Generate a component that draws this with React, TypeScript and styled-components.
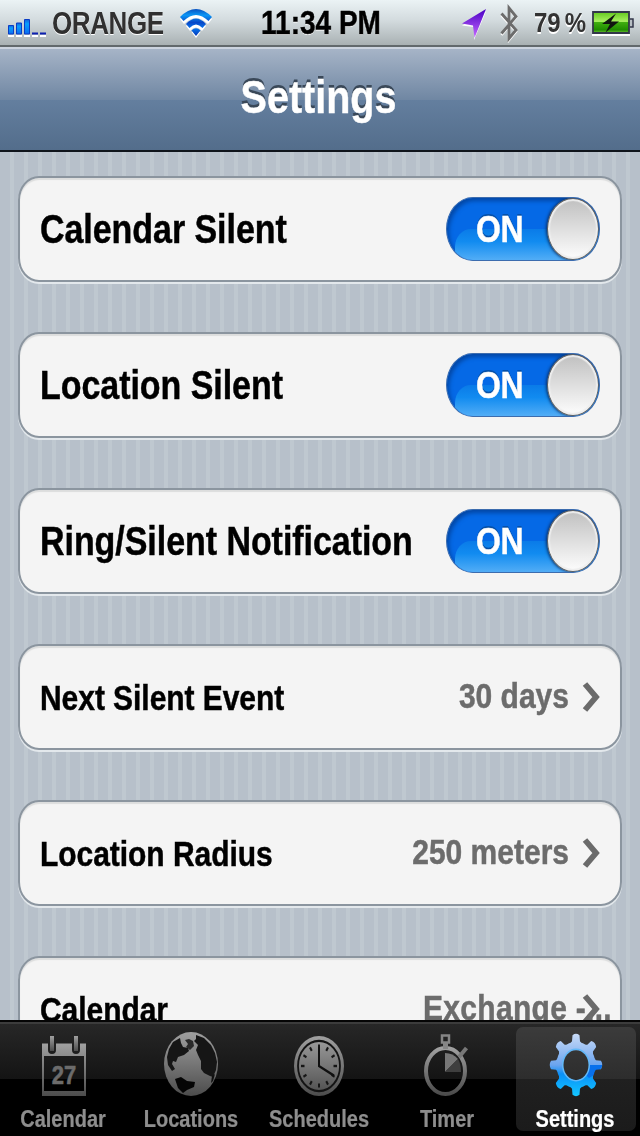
import styled, { createGlobalStyle, css } from 'styled-components'

const GlobalStyle = createGlobalStyle`
  * {
    box-sizing: border-box;
  }

  body {
    margin: 0;
    overflow: hidden;
    font-family: 'Liberation Sans', Arial, sans-serif;
    font-weight: bold;
  }
`

const settings = [
  { title: 'Calendar Silent', on: true },
  { title: 'Location Silent', on: true },
  { title: 'Ring/Silent Notification', on: true },
  { title: 'Next Silent Event', value: '30 days' },
  { title: 'Location Radius', value: '250 meters' },
  { title: 'Calendar', value: 'Exchange -...', overflow: true },
]

const SignalIcon = () => (
  <svg width="40" height="20" viewBox="0 0 40 20">
    <defs>
      <linearGradient id="signal" x1="0" y1="0" x2="0" y2="1">
        <stop offset="0" stopColor="#1560d8" />
        <stop offset="0.3" stopColor="#08a0ff" />
        <stop offset="1" stopColor="#0b6cf0" />
      </linearGradient>
    </defs>
    <path d="M0 17h6v2H0zM8 17h6v2H8zM16 17h6v2h-6zM24 17h6v2h-6zM32 17h6v2h-6z" fill="#fff" />
    <g fill="url(#signal)" stroke="#0a3dc5" strokeWidth="1">
      <path d="M.5 7.500h5v8.500h-5z" />
      <path d="M8.500 5h5v11h-5z" />
      <path d="M16.500 1.500h5V16h-5z" />
    </g>
    <path d="M24 14.500h6v2h-6zM32 14.500h6v2h-6z" fill="#0c1fb0" />
  </svg>
)

const WifiIcon = () => (
  <svg width="34" height="32" viewBox="0 -1 34 32">
    <defs>
      <linearGradient id="wifi" x1="0" y1="0" x2="0" y2="29" gradientUnits="userSpaceOnUse">
        <stop offset="0" stopColor="#0646b8" />
        <stop offset="0.25" stopColor="#0a96f5" />
        <stop offset="0.5" stopColor="#0848c8" />
        <stop offset="0.7" stopColor="#0877f0" />
        <stop offset="1" stopColor="#0430b0" />
      </linearGradient>
    </defs>
    <path d="M1 11Q17-6 33 11l-4 5Q17 4 5 16zM7 18q10-11 20 0l-4 5q-6-7-12 0zM12.500 24q4.500-4 9 0L17 30z" fill="#fff" />
    <path d="M1 9Q17-7 33 9l-3.500 4Q17 1 4.500 13zM7 16q10-11 20 0l-3.500 4q-6.500-7-13 0zM12.500 22.500q4.500-4.500 9 0L17 28z" fill="url(#wifi)" />
  </svg>
)

const LocationIcon = () => (
  <svg width="26" height="32" viewBox="0 0 26 32">
    <defs>
      <linearGradient id="arrow" x1="0" y1="0" x2="0" y2="1">
        <stop offset="0" stopColor="#4a00c4" />
        <stop offset="1" stopColor="#c66aff" />
      </linearGradient>
    </defs>
    <path d="M25 2.500 13 31V18L1 16.500z" fill="#fff" />
    <path d="M25 0 13.500 29 12 16.500 1 14.500z" fill="url(#arrow)" />
  </svg>
)

const BluetoothIcon = () => (
  <svg width="20" height="40" viewBox="0 0 20 40">
    <path d="M1.500 12.500 16 28.500 9 37V6l7 8.500L1.500 32" fill="none" stroke="#fff" strokeWidth="2.500" />
    <path d="M1.500 10.500 16 27 9 35.500V5l7 8.500L1.500 30.500" fill="none" stroke="#6c6c6c" strokeWidth="2.800" />
  </svg>
)

const BatteryIcon = () => (
  <svg width="42" height="26" viewBox="0 -1 42 26">
    <defs>
      <linearGradient id="battery" x1="0" y1="0" x2="0" y2="1">
        <stop offset="0" stopColor="#62c81e" />
        <stop offset="0.45" stopColor="#a8f060" />
        <stop offset="0.5" stopColor="#3fae10" />
        <stop offset="0.85" stopColor="#1f8c00" />
        <stop offset="1" stopColor="#73c838" />
      </linearGradient>
    </defs>
    <path d="M0 23h38v2H0z" fill="#fff" />
    <path d="M1 1h36v21H1z" fill="url(#battery)" stroke="#33374a" strokeWidth="1.800" />
    <path d="M38 8h3v8h-3" fill="#b8bfc4" stroke="#33374a" strokeWidth="1.500" />
    <path d="M24 2.500 10 13h8l-4.500 8.500L27 10.500h-8z" fill="#101510" />
  </svg>
)

const Chevron = () => (
  <svg width="18" height="32" viewBox="0 0 18 32">
    <path d="M3 3 14 16 3 29" fill="none" stroke="#6a6a6a" strokeWidth="5.800" />
  </svg>
)

const CalendarIcon = () => (
  <svg width="46" height="62" viewBox="-2 -2 46 62">
    <path fillRule="evenodd" d="M0 7.500h6V14q0 4 4 4t4-4V7.500h16V14q0 4 4 4t4-4V7.500h6V60H0zM2 20v35h40V20z" fill="url(#glyph)" />
    <path d="M8 0h4v15H8zM32 0h4v15h-4z" fill="url(#glyph)" />
    <text transform="translate(22 48) scale(1 1.180)" textAnchor="middle" fontSize="22" fill="#6c6c6c" stroke="#6c6c6c" strokeWidth="0.500">
      27
    </text>
  </svg>
)

const GlobeIcon = () => (
  <svg width="56" height="66" viewBox="0 1 56 66">
    <ellipse cx="28" cy="33" rx="27" ry="32" fill="url(#glyph)" />
    <path d="M17 7 10 11 6 18 4 26 5 34 9 40 12 38 9 33 10 30 13 31 15 26 21 24 26 20 25 17 20 16 18 12z" fill="#161616" />
    <path d="m22 9 4-1 4 2 1 5-4 4-4-3 2-3z" fill="#2a2a2a" />
    <path d="m33 4 8 3 7 7 4 8 2 9-1 8-3 7-3-1-6-3-3-4V30l-3-6-2-5 2-5-4-4 2-2z" fill="#161616" />
    <path d="m12 48 6-2 6 4 8 1-1 5-7 3-4 3-5-5z" fill="#050505" />
    <path d="m49 45 3-2-2 7-2 2z" fill="#101010" />
  </svg>
)

const ticks = Array.from({ length: 12 }, (_, i) => i * 30)

const ClockIcon = () => (
  <svg width="50" height="62" viewBox="0 -2 50 62">
    <g transform="scale(1 1.200)">
      <circle cx="25" cy="25" r="25" fill="url(#glyph)" />
      <circle cx="25" cy="25" r="21" fill="none" stroke="#141414" strokeWidth="1.800" />
      {ticks.map(angle => (
        <path key={angle} d="M25 7v3.500" stroke="#161616" strokeWidth="2" transform={`rotate(${angle} 25 25)`} />
      ))}
      <path d="M25 9v16l15 8" fill="none" stroke="#101010" strokeWidth="2" />
    </g>
  </svg>
)

const TimerIcon = () => (
  <svg width="46" height="62" viewBox="0 0 46 62">
    <ellipse cx="21.500" cy="37" rx="19.500" ry="23" fill="none" stroke="url(#glyph)" strokeWidth="4" />
    <path d="M18 1.500h7v7h-7z" fill="none" stroke="#858585" strokeWidth="2.500" />
    <path d="M19 9h5v6h-5z" fill="#858585" />
    <path d="m35 23 7.500-9" fill="none" stroke="#777" strokeWidth="4" />
    <path d="M21 19q8 0 13 6L21 38z" fill="#777" />
    <path d="M34 25q3 5 3 13H21z" fill="#3f3f3f" />
  </svg>
)

const teeth = Array.from({ length: 8 }, (_, i) => i * 45)

const GearIcon = () => (
  <svg width="56" height="64" viewBox="-2 0 56 64">
    <defs>
      <linearGradient id="gear" x1="0" y1="0" x2="0" y2="1">
        <stop offset="0" stopColor="#cbdcf7" />
        <stop offset="0.500" stopColor="#6ba4ee" />
        <stop offset="0.640" stopColor="#0990f8" />
        <stop offset="1" stopColor="#14c8ff" />
      </linearGradient>
      <mask id="gearMask">
        <g transform="translate(27 32) scale(1 1.190)">
          <circle r="19.500" fill="#fff" />
          {teeth.map(angle => (
            <path key={angle} d="M-7-17-4-20-3.500-25Q0-27.500 3.500-25L4-20 7-17z" fill="#fff" transform={`rotate(${angle})`} />
          ))}
          <circle r="12.500" fill="#000" />
        </g>
      </mask>
    </defs>
    <g mask="url(#gearMask)">
      <path d="M0 0h54v64H0z" fill="url(#gear)" />
      <path d="M27 32h27q-4 8-14 13z" fill="#0870ec" />
      <ellipse cx="27" cy="32" rx="13" ry="15.500" fill="none" stroke="#62b8f8" strokeWidth="2" />
    </g>
  </svg>
)

const tabs = [
  { label: 'Calendar', Icon: CalendarIcon },
  { label: 'Locations', Icon: GlobeIcon },
  { label: 'Schedules', Icon: ClockIcon },
  { label: 'Timer', Icon: TimerIcon },
  { label: 'Settings', Icon: GearIcon, active: true },
]

const App = () => {
  return (
    <S.Screen>
      <GlobalStyle />
      <S.Defs>
        <defs>
          <linearGradient id="glyph" x1="0" y1="0" x2="0" y2="1">
            <stop offset="0" stopColor="#a0a0a0" />
            <stop offset="1" stopColor="#4c4c4c" />
          </linearGradient>
        </defs>
      </S.Defs>

      <S.StatusBar>
        <S.StatusSide>
          <SignalIcon />
          <S.Carrier>ORANGE</S.Carrier>
          <WifiIcon />
        </S.StatusSide>
        <S.Time>11:34 PM</S.Time>
        <S.StatusSide $end>
          <LocationIcon />
          <BluetoothIcon />
          <S.Percent>
            <span>79</span>
            <span>%</span>
          </S.Percent>
          <BatteryIcon />
        </S.StatusSide>
      </S.StatusBar>

      <S.NavBar>
        <S.Title>Settings</S.Title>
      </S.NavBar>

      <S.Content>
        {settings.map(({ title, on, value, overflow }) => (
          <S.Row key={title}>
            <S.RowTitle $large={on}>{title}</S.RowTitle>
            {on ? (
              <S.Switch>
                <S.SwitchText>ON</S.SwitchText>
                <S.Knob />
              </S.Switch>
            ) : (
              <S.Detail>
                <S.Value $overflow={overflow}>{value}</S.Value>
                <Chevron />
              </S.Detail>
            )}
          </S.Row>
        ))}
      </S.Content>

      <S.TabBar>
        {tabs.map(({ label, Icon, active }) => (
          <S.Tab key={label} $active={active}>
            <S.TabIcon>
              <Icon />
            </S.TabIcon>
            <S.TabLabel>{label}</S.TabLabel>
          </S.Tab>
        ))}
      </S.TabBar>
    </S.Screen>
  )
}

// letters are taller and a bit heavier than the font draws them
const Tall = css`
  display: block;
  white-space: nowrap;
  transform: scaleY(1.183);
  -webkit-text-stroke: 0.4px currentColor;
`

const S = {
  Screen: styled.div`
    display: flex;
    flex-direction: column;
    width: 640px;
    height: 1136px;
    overflow: hidden;
    background: #000;
  `,

  Defs: styled.svg`
    position: absolute;
    width: 0;
    height: 0;
  `,

  StatusBar: styled.header`
    display: grid;
    grid-template-columns: 1fr auto 1fr;
    align-items: center;
    flex: none;
    height: 47px;
    padding: 0 6px 0 8px;
    border-bottom: 2px solid #62696c;
    background: linear-gradient(#ebf3f5, #d3dbde 45%, #a9b1b3);
  `,

  StatusSide: styled.div<{ $end?: boolean }>`
    display: flex;
    align-items: center;
    justify-content: ${({ $end }) => ($end ? 'flex-end' : 'flex-start')};

    svg {
      flex: none;
    }

    svg:nth-of-type(1) {
      margin-top: ${({ $end }) => ($end ? '5px' : '10px')};
      margin-right: ${({ $end }) => ($end ? '13px' : '0')};
    }

    svg:nth-of-type(2) {
      margin-top: 1px;
    }
  `,

  Carrier: styled.span`
    ${Tall}
    margin: 1px 15px 0 4px;
    font-size: 26px;
    letter-spacing: -0.4px;
    line-height: 30px;
    color: #303030;
    text-shadow: 0 1px 0 #fff;
    -webkit-text-stroke: 0;
  `,

  Time: styled.span`
    ${Tall}
    margin-top: 1px;
    font-size: 28px;
    line-height: 32px;
    color: #000;
    text-shadow: 0 1px 0 #fff;
  `,

  Percent: styled.span`
    ${Tall}
    display: flex;
    gap: 4px;
    margin: 1px 6px 0 14px;
    font-size: 24px;
    line-height: 28px;
    color: #333;
    text-shadow: 0 1px 0 #fff;
    -webkit-text-stroke: 0;
  `,

  NavBar: styled.div`
    display: flex;
    justify-content: center;
    align-items: center;
    flex: none;
    height: 105px;
    border-top: 2px solid #ccd4df;
    border-bottom: 2px solid #10151c;
    background: linear-gradient(#a6b4c7, #7087a3 50%, #647f9f 50%, #536d8b);
  `,

  Title: styled.h1`
    ${Tall}
    margin: 0 3px 8px 0;
    font-size: 39.5px;
    line-height: 46px;
    color: #fff;
    text-shadow: 0 -2px 0 #3a4858;
  `,

  Content: styled.main`
    display: flex;
    flex-direction: column;
    gap: 50px;
    flex: 1;
    min-height: 0;
    padding: 24px 18px 0;
    overflow: hidden;
    background: repeating-linear-gradient(90deg, #b7c0ca 0 10px, #bfc8d0 10px 14px);
  `,

  Row: styled.section`
    display: flex;
    justify-content: space-between;
    align-items: center;
    flex: none;
    height: 106px;
    padding: 0 20px;
    border: 2px solid #8b959f;
    border-radius: 21px / 24px;
    background: #f4f4f4;
    box-shadow: 0 2px 0 #e3e8ec, inset 0 2px 1px #dcdddd;
  `,

  RowTitle: styled.h2<{ $large?: boolean }>`
    ${Tall}
    margin: ${({ $large }) => ($large ? '0' : '2px 0 0')};
    font-size: ${({ $large }) => ($large ? 34 : 30)}px;
    letter-spacing: -0.05px;
    line-height: 40px;
    color: #000;
  `,

  Switch: styled.div`
    position: relative;
    display: flex;
    align-items: center;
    justify-content: space-between;
    width: 154px;
    height: 64px;
    padding-left: 29px;
    overflow: hidden;
    border: 1px solid #3c6cae;
    border-radius: 27px / 32px;
    background: #0569e6;
    box-shadow: inset 2px 3px 4px #0347a5;

    &::before {
      content: '';
      position: absolute;
      inset: 31px 0 0 8px;
      border-top-left-radius: 16px 18px;
      background: linear-gradient(#0a7be8, #118bf0 40%, #52adf6);
    }
  `,

  SwitchText: styled.span`
    ${Tall}
    position: relative;
    font-size: 32px;
    letter-spacing: -0.3px;
    line-height: 38px;
    color: #fff;
    text-shadow: 0 -2px 0 #0650a8;
  `,

  Knob: styled.span`
    position: relative;
    width: 52px;
    height: 62px;
    border: 1px solid #606060;
    border-radius: 50%;
    background: linear-gradient(#c0c0c0, #fdfdfd);
    box-shadow: inset 0 0 1px 2px #eeeeee, -1px 0 3px #0b2f66;
  `,

  Detail: styled.div`
    display: flex;
    align-items: center;
    gap: 13px;
  `,

  Value: styled.span<{ $overflow?: boolean }>`
    ${Tall}
    margin: 0 ${({ $overflow }) => ($overflow ? -43 : 0)}px 2px 0;
    font-size: 30px;
    letter-spacing: ${({ $overflow }) => ($overflow ? 0.3 : 0)}px;
    line-height: 36px;
    color: #6c6c6c;
  `,

  TabBar: styled.nav`
    display: grid;
    grid-template-columns: repeat(5, 120px);
    column-gap: 8px;
    flex: none;
    height: 116px;
    padding: 5px 4px;
    border-top: 2px solid #050505;
    background: linear-gradient(#3c3c3c 0 2px, #272727 2px, #141414 57px, #000 57px);
  `,

  Tab: styled.div<{ $active?: boolean }>`
    display: flex;
    flex-direction: column;
    align-items: center;
    height: 104px;
    padding-right: 2px;
    border-radius: 7px;
    color: ${({ $active }) => ($active ? '#fff' : '#8e8e8e')};
    background: ${({ $active }) => ($active ? 'linear-gradient(#3b3b3b, #2d2d2d 50%, #202020 50%, #1b1b1b)' : 'none')};
  `,

  TabIcon: styled.span`
    display: flex;
    align-items: center;
    height: 76px;
  `,

  TabLabel: styled.span`
    ${Tall}
    margin-top: 4px;
    font-size: 20px;
    line-height: 24px;
    -webkit-text-stroke-width: 0.2px;
  `,
}

export default App
